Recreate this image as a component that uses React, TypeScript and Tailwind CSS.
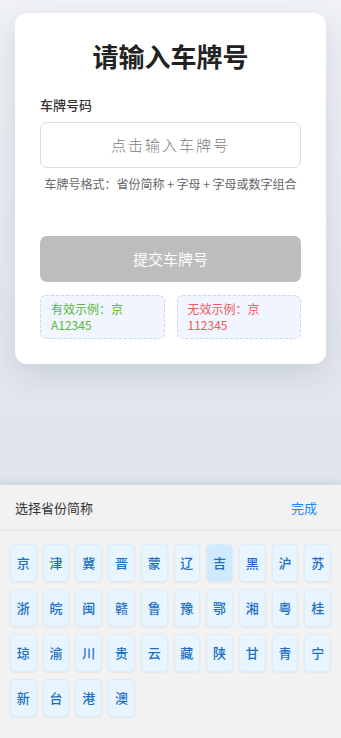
import { useState } from "react";

const provinces = [
  "京", "津", "冀", "晋", "蒙", "辽", "吉", "黑", "沪", "苏",
  "浙", "皖", "闽", "赣", "鲁", "豫", "鄂", "湘", "粤", "桂",
  "琼", "渝", "川", "贵", "云", "藏", "陕", "甘", "青", "宁",
  "新", "台", "港", "澳",
];

const font = "font-['Noto_Sans_CJK_SC','Noto_Sans',sans-serif]";

export default function App() {
  const [active] = useState("吉");

  return (
    <div className={`h-[738px] w-full flex flex-col overflow-hidden bg-gradient-to-b from-[#f0f2f5] to-[#d5dce8] ${font}`}>
      {/* Card */}
      <div className="mx-[15px] mt-[13px] bg-white rounded-[12px] px-[25px] pt-[25px] pb-[25px] shadow-[0_10px_30px_rgba(60,80,120,0.16)]">
        <h1 className="text-center text-[26px] leading-[36px] font-bold text-[#222]">请输入车牌号</h1>

        <div className="mt-[22px] text-[13px] leading-[18px] font-medium text-[#333]">车牌号码</div>

        <div className="mt-[8px] h-[46px] rounded-[7px] border-[1.5px] border-[#dcdcdc] flex items-center justify-center">
          <span className="text-[15px] tracking-[2px] font-light text-[#808080]">点击输入车牌号</span>
        </div>

        <p className="mt-[8px] text-center text-[12px] leading-[16px] text-[#666] whitespace-nowrap">
          车牌号格式：省份简称 + 字母 + 字母或数字组合
        </p>

        <button className="mt-[44px] w-full h-[46px] rounded-[7px] bg-[#bdbdbd] text-white text-[15px]">
          提交车牌号
        </button>

        {/* Examples */}
        <div className="mt-[13px] grid grid-cols-2 gap-[12px]">
          <div className="h-[44px] rounded-[6px] border border-dashed border-[#cdd5ee] bg-[#f0f5ff] px-[10px] pt-[5px] text-[12px] leading-[15.5px] text-[#5cb82f]">
            有效示例：京 A12345
          </div>
          <div className="h-[44px] rounded-[6px] border border-dashed border-[#cdd5ee] bg-[#f0f5ff] px-[10px] pt-[5px] text-[12px] leading-[15.5px] text-[#f05a5a]">
            无效示例：京 112345
          </div>
        </div>
      </div>

      {/* Province keyboard */}
      <div className="mt-auto h-[253px] bg-[#f2f2f2] shadow-[0_-2px_8px_rgba(0,0,0,0.08)]">
        <div className="h-[46px] flex items-center justify-between pl-[15px] pr-[24px] border-b border-[#e3e3e3]">
          <span className="text-[13px] text-[#333]">选择省份简称</span>
          <span className="text-[13px] text-[#1989fa]">完成</span>
        </div>
        <div className="grid grid-cols-10 gap-x-[6px] gap-y-[7px] px-[10px] pt-[13px]">
          {provinces.map((p) => (
            <div
              key={p}
              className={`h-[38px] flex items-center justify-center rounded-[5px] border border-[#dcecf8] text-[13px] font-medium text-[#1c6fc4] shadow-[0_1px_2px_rgba(0,0,0,0.06)] ${
                p === active ? "bg-[#cfeafc]" : "bg-[#e8f5fe]"
              }`}
            >
              {p}
            </div>
          ))}
        </div>
      </div>
    </div>
  );
}
